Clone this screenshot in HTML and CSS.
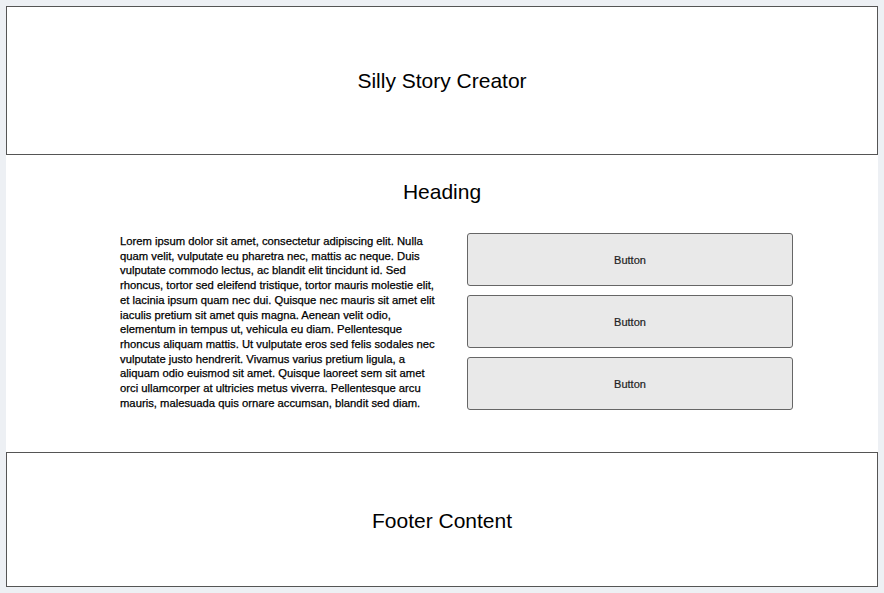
FILE: index.html
```html
<!DOCTYPE html>
<html>
<head>
<meta charset="utf-8">
<link rel="stylesheet" href="styles.css">
</head>
<body>
<div class="page">
  <header class="site-header">
    <h1 class="site-title">Silly Story Creator</h1>
  </header>
  <main class="main">
    <h2 class="heading">Heading</h2>
    <div class="columns">
      <p class="body-text">Lorem ipsum dolor sit amet, consectetur adipiscing elit. Nulla quam velit, vulputate eu pharetra nec, mattis ac neque. Duis vulputate commodo lectus, ac blandit elit tincidunt id. Sed rhoncus, tortor sed eleifend tristique, tortor mauris molestie elit, et lacinia ipsum quam nec dui. Quisque nec mauris sit amet elit iaculis pretium sit amet quis magna. Aenean velit odio, elementum in tempus ut, vehicula eu diam. Pellentesque rhoncus aliquam mattis. Ut vulputate eros sed felis sodales nec vulputate justo hendrerit. Vivamus varius pretium ligula, a aliquam odio euismod sit amet. Quisque laoreet sem sit amet orci ullamcorper at ultricies metus viverra. Pellentesque arcu mauris, malesuada quis ornare accumsan, blandit sed diam.</p>
      <div class="buttons">
        <button class="btn">Button</button>
        <button class="btn">Button</button>
        <button class="btn">Button</button>
      </div>
    </div>
  </main>
  <footer class="site-footer">
    <p class="footer-text">Footer Content</p>
  </footer>
</div>
</body>
</html>
```
FILE: styles.css
```css
html, body {
  margin: 0;
  padding: 0;
}
body {
  background: #edf0f4;
  font-family: "Liberation Sans", Arial, sans-serif;
  color: #000;
}
.page {
  padding: 6px;
  display: flex;
  flex-direction: column;
}
.site-header {
  height: 147px;
  background: #fff;
  border: 1px solid #555;
  display: flex;
  align-items: center;
  justify-content: center;
}
.site-title {
  margin: 1px 0 0;
  font-size: 21px;
  font-weight: normal;
}
.main {
  background: #fff;
  height: 297px;
  box-sizing: border-box;
  padding-top: 25px;
}
.heading {
  margin: 0;
  text-align: center;
  font-size: 21px;
  font-weight: normal;
  line-height: 24px;
}
.columns {
  display: grid;
  grid-template-columns: 326px 326px;
  column-gap: 21px;
  padding-left: 114px;
  margin-top: 29px;
}
.body-text {
  margin: 0;
  padding: 1px 4px 0 0;
  font-size: 11.25px;
  line-height: 14.7px;
  font-weight: normal;
  color: #000;
  -webkit-text-stroke: 0.25px #000;
}
.buttons {
  display: flex;
  flex-direction: column;
  gap: 9px;
}
.btn {
  height: 53px;
  background: #e9e9e9;
  border: 1px solid #666;
  border-radius: 3px;
  font-family: "Liberation Sans", Arial, sans-serif;
  font-size: 11px;
  color: #222;
  -webkit-text-stroke: 0.2px #222;
  padding: 0;
}
.site-footer {
  height: 133px;
  background: #fff;
  border: 1px solid #555;
  display: flex;
  align-items: center;
  justify-content: center;
}
.footer-text {
  margin: 2px 0 0;
  font-size: 21px;
}
```
